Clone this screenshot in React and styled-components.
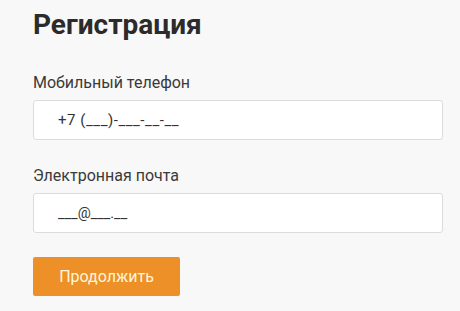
import React from 'react';
import styled, { createGlobalStyle } from 'styled-components';

const GlobalStyle = createGlobalStyle`
  body {
    margin: 0;
    background: #f8f8f8;
    font-family: Roboto, "Liberation Sans", sans-serif;
  }
`;

const Page = styled.div`
  padding: 6px 17px 0 33px;
  display: flex;
  flex-direction: column;
`;

const Title = styled.h1`
  margin: 0;
  font-size: 28px;
  line-height: 38px;
  font-weight: 700;
  color: #2b2b2b;
`;

const Form = styled.form`
  display: flex;
  flex-direction: column;
  margin-top: 29px;
`;

const Field = styled.div`
  display: flex;
  flex-direction: column;

  & + & {
    margin-top: 26px;
  }
`;

const Label = styled.label`
  font-size: 16px;
  line-height: 20px;
  color: #3a3a3a;
  margin-bottom: 7px;
`;

const Input = styled.input`
  box-sizing: border-box;
  height: 40px;
  width: 100%;
  border: 1px solid #dcdcdc;
  border-radius: 3px;
  background: #fff;
  padding: 0 24px;
  font-family: Roboto, "Liberation Sans", sans-serif;
  font-size: ${(p) => p.$size || 15}px;
  letter-spacing: ${(p) => p.$spacing || 0}px;
  color: #333;
  outline: none;
`;

const Button = styled.button`
  box-sizing: border-box;
  align-self: flex-start;
  width: 147px;
  height: 39px;
  margin-top: 24px;
  border: none;
  border-radius: 2px;
  background: #ed9027;
  color: #fff6dc;
  font-family: Roboto, "Liberation Sans", sans-serif;
  font-size: 16px;
  cursor: pointer;
`;

export default function App() {
  return (
    <>
      <GlobalStyle />
      <Page>
        <Title>Регистрация</Title>
        <Form onSubmit={(e) => e.preventDefault()}>
          <Field>
            <Label>Мобильный телефон</Label>
            <Input defaultValue="+7 (___)-___-__-__" $spacing={0.55} />
          </Field>
          <Field>
            <Label>Электронная почта</Label>
            <Input defaultValue="___@___.__" $size={14.5} />
          </Field>
          <Button type="submit">Продолжить</Button>
        </Form>
      </Page>
    </>
  );
}
